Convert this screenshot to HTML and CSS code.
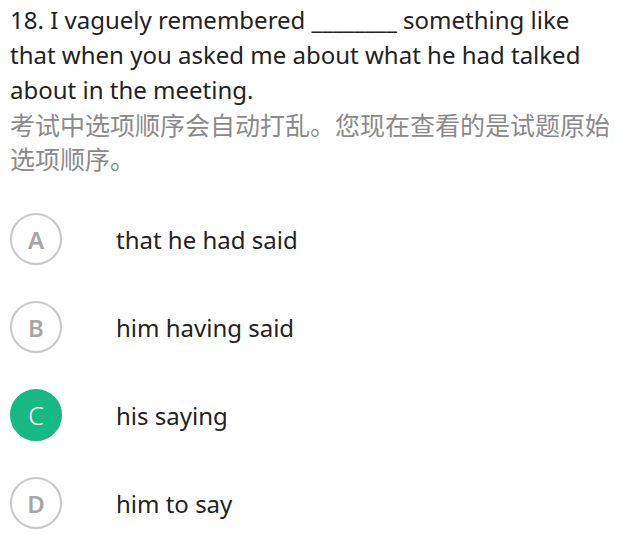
FILE: index.html
```html
<!DOCTYPE html>
<html lang="zh">
<head>
<meta charset="utf-8">
<link rel="stylesheet" href="styles.css">
</head>
<body>
<div class="page">
  <p class="question">18. I vaguely remembered ________ something like that when you asked me about what he had talked about in the meeting.</p>
  <p class="note">考试中选项顺序会自动打乱。您现在查看的是试题原始选项顺序。</p>
  <div class="options">
    <div class="option"><span class="badge">A</span><span class="text">that he had said</span></div>
    <div class="option"><span class="badge">B</span><span class="text">him having said</span></div>
    <div class="option"><span class="badge selected">C</span><span class="text">his saying</span></div>
    <div class="option"><span class="badge">D</span><span class="text">him to say</span></div>
  </div>
</div>
</body>
</html>
```

FILE: styles.css
```css
html, body {
  margin: 0;
  padding: 0;
  background: #ffffff;
}
.page {
  padding: 2px 10px 0 10px;
  font-family: "Noto Sans", "Noto Sans CJK SC", sans-serif;
  color: #222222;
}
.question {
  margin: 0;
  font-size: 24px;
  line-height: 35px;
  padding-right: 30px;
}
.note {
  margin: 0;
  font-family: "Noto Sans CJK SC", sans-serif;
  font-size: 25px;
  line-height: 34px;
  color: #8a8a8a;
}
.options {
  margin-top: 20px;
  display: flex;
  flex-direction: column;
}
.option {
  height: 88px;
  display: flex;
  align-items: center;
}
.badge {
  box-sizing: border-box;
  width: 52px;
  height: 52px;
  border-radius: 50%;
  border: 2px solid #c8c8c8;
  color: #a6a6a6;
  font-size: 24px;
  font-weight: 600;
  display: flex;
  align-items: center;
  justify-content: center;
  flex-shrink: 0;
}
.badge.selected {
  background: #18b885;
  border-color: #18b885;
  color: #ffffff;
  font-weight: 300;
  font-size: 25px;
}
.text {
  margin-left: 54px;
  font-size: 24px;
  color: #222222;
}
```
